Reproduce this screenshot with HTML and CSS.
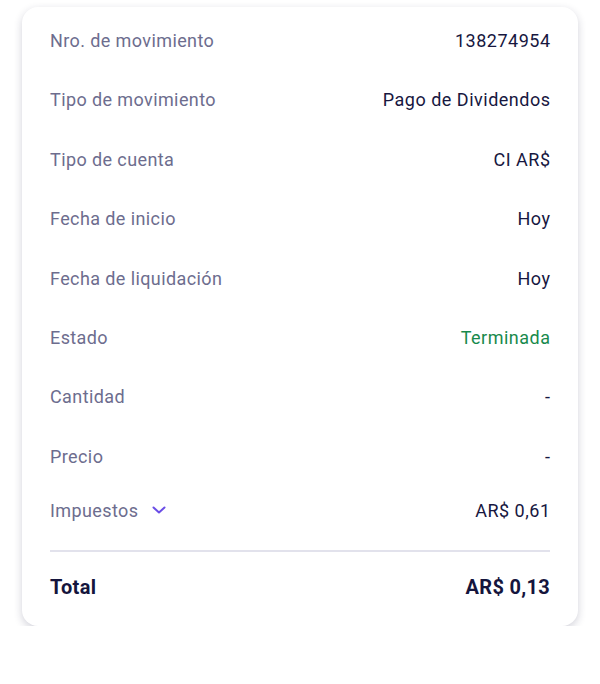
FILE: index.html
```html
<!DOCTYPE html>
<html lang="es">
<head>
    <meta charset="UTF-8">
    <meta name="viewport" content="width=device-width, initial-scale=1.0">
    <title>Detalle de movimiento</title>
    <link rel="stylesheet" href="styles.css">
</head>
<body>
    <div class="card">
        <div class="details">
            <div class="row">
                <span class="label">Nro. de movimiento</span>
                <span class="value">138274954</span>
            </div>
            <div class="row">
                <span class="label">Tipo de movimiento</span>
                <span class="value">Pago de Dividendos</span>
            </div>
            <div class="row">
                <span class="label">Tipo de cuenta</span>
                <span class="value">CI AR$</span>
            </div>
            <div class="row">
                <span class="label">Fecha de inicio</span>
                <span class="value">Hoy</span>
            </div>
            <div class="row">
                <span class="label">Fecha de liquidación</span>
                <span class="value">Hoy</span>
            </div>
            <div class="row">
                <span class="label">Estado</span>
                <span class="value done">Terminada</span>
            </div>
            <div class="row">
                <span class="label">Cantidad</span>
                <span class="value">-</span>
            </div>
            <div class="row">
                <span class="label">Precio</span>
                <span class="value">-</span>
            </div>
            <div class="row taxes">
                <span class="label">Impuestos
                    <svg class="chevron" width="14" height="8" viewBox="0 0 14 8">
                        <path d="M1.5 1.5 L7 6.5 L12.5 1.5" fill="none" stroke="#6a4de6" stroke-width="2" stroke-linecap="round" stroke-linejoin="round"/>
                    </svg>
                </span>
                <span class="value">AR$ 0,61</span>
            </div>
        </div>

        <div class="total">
            <span>Total</span>
            <span>AR$ 0,13</span>
        </div>
    </div>
</body>
</html>
```

FILE: styles.css
```css
body {
    font-family: Roboto, "Noto Sans", sans-serif;
    margin: 0;
    padding: 0;
    background-color: #fff;
}

.card {
    margin: 7px 22px 0;
    padding: 22px 28px 26px;
    background: #fff;
    border-radius: 16px;
    box-shadow: 0 3px 8px rgba(30, 30, 70, 0.2);
}

.details {
    display: flex;
    flex-direction: column;
    gap: 35.4px;
    padding-bottom: 27px;
    border-bottom: 2px solid #e2e2ec;
}

.row {
    display: flex;
    justify-content: space-between;
    align-items: center;
    font-size: 18px;
    line-height: 24px;
    letter-spacing: 0.4px;
}

.row.taxes {
    margin-top: -5px;
}

.label {
    color: #6d6d8e;
    display: flex;
    align-items: center;
}

.value {
    color: #17173f;
    letter-spacing: 0.5px;
    margin-right: -0.5px;
}

.value.done {
    color: #188a4c;
}

.chevron {
    margin-left: 14px;
    margin-top: -2px;
}

.total {
    display: flex;
    justify-content: space-between;
    margin-top: 22px;
    font-size: 20px;
    line-height: 26px;
    font-weight: 700;
    letter-spacing: 0.3px;
    color: #15153d;
}
```
